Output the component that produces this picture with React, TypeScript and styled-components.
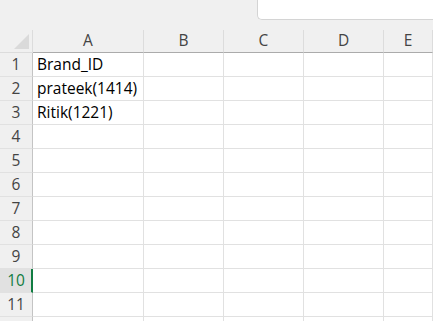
import React from "react";
import styled, { createGlobalStyle } from "styled-components";

const Global = createGlobalStyle`
  html, body { margin: 0; padding: 0; background: #ffffff; overflow: hidden; }
  body { font-family: "Open Sans", "Noto Sans", sans-serif; }
`;

const Page = styled.div`
  width: 433px;
  height: 321px;
  overflow: hidden;
  background: #ffffff;
`;

const TopStrip = styled.div`
  height: 30px;
  background: #f0f0f0;
  display: flex;
  justify-content: flex-end;
  align-items: flex-start;
`;

const FormulaBox = styled.div`
  width: 176px;
  height: 20px;
  box-sizing: border-box;
  background: #ffffff;
  border-left: 1px solid #d4d4d4;
  border-bottom: 1px solid #d4d4d4;
  border-bottom-left-radius: 5px;
`;

const Sheet = styled.div`
  display: grid;
  grid-template-columns: 33px 111px 80px 80px 80px 1fr;
`;

const Corner = styled.div`
  height: 23px;
  box-sizing: border-box;
  background: #f0f0f0;
  border-right: 1px solid #dcdcdc;
  border-bottom: 1px solid #dcdcdc;
  display: flex;
  justify-content: flex-end;
  align-items: flex-end;
  padding: 0 3px 3px 0;
`;

const Triangle = styled.div`
  width: 0;
  height: 0;
  border-left: 15px solid transparent;
  border-bottom: 15px solid #dadada;
`;

const ColHead = styled.div`
  height: 23px;
  box-sizing: border-box;
  background: #f0f0f0;
  border-right: 1px solid #dcdcdc;
  border-bottom: 1px solid #ababab;
  color: #444444;
  font-size: 15.5px;
  line-height: 21px;
  text-align: center;
`;

const RowHead = styled.div<{ $active?: boolean }>`
  height: 24px;
  box-sizing: border-box;
  background: ${(p) => (p.$active ? "#e1e1e1" : "#f0f0f0")};
  border-right: ${(p) => (p.$active ? "2px solid #107c41" : "1px solid #c4c4c4")};
  border-bottom: 1px solid #e1e1e1;
  color: ${(p) => (p.$active ? "#107c41" : "#444444")};
  font-size: 15.5px;
  line-height: 23px;
  text-align: center;
  padding-left: ${(p) => (p.$active ? "1px" : "0")};
`;

const Cell = styled.div`
  height: 24px;
  box-sizing: border-box;
  border-right: 1px solid #e1e1e1;
  border-bottom: 1px solid #e1e1e1;
  color: #000000;
  font-size: 15.5px;
  line-height: 23px;
  padding-left: 4px;
  white-space: nowrap;
  overflow: hidden;
`;

const columns = ["A", "B", "C", "D", "E"];
const data: Record<number, string> = {
  1: "Brand_ID",
  2: "prateek(1414)",
  3: "Ritik(1221)",
};
const rows = Array.from({ length: 12 }, (_, i) => i + 1);

export default function App() {
  return (
    <Page>
      <Global />
      <TopStrip>
        <FormulaBox />
      </TopStrip>
      <Sheet>
        <Corner>
          <Triangle />
        </Corner>
        {columns.map((c) => (
          <ColHead key={c}>{c}</ColHead>
        ))}
        {rows.map((r) => (
          <React.Fragment key={r}>
            <RowHead $active={r === 10}>{r}</RowHead>
            {columns.map((c) => (
              <Cell key={c}>{c === "A" ? data[r] ?? "" : ""}</Cell>
            ))}
          </React.Fragment>
        ))}
      </Sheet>
    </Page>
  );
}
